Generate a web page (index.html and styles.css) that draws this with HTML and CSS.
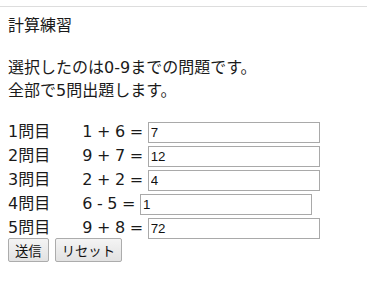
FILE: index.html
```html
<!DOCTYPE html>
<html lang="ja">
<head>
<meta charset="utf-8">
<title>計算練習</title>
<link rel="stylesheet" href="styles.css">
</head>
<body>
<div class="frame">
  <h1 class="title">計算練習</h1>
  <p class="intro">選択したのは0-9までの問題です。<br>全部で5問出題します。</p>
  <form class="quiz">
    <div class="row"><span class="num">1問目</span><span class="eq">1 + 6 = </span><input class="answer" type="text" value="7"></div>
    <div class="row"><span class="num">2問目</span><span class="eq">9 + 7 = </span><input class="answer" type="text" value="12"></div>
    <div class="row"><span class="num">3問目</span><span class="eq">2 + 2 = </span><input class="answer" type="text" value="4"></div>
    <div class="row"><span class="num">4問目</span><span class="eq">6 - 5 = </span><input class="answer" type="text" value="1"></div>
    <div class="row"><span class="num">5問目</span><span class="eq">9 + 8 = </span><input class="answer" type="text" value="72"></div>
    <div class="actions"><button class="btn" type="button">送信</button><button class="btn" type="reset">リセット</button></div>
  </form>
</div>
</body>
</html>
```
FILE: styles.css
```css
html, body {
  margin: 0;
  padding: 0;
  background: #ffffff;
}
body {
  font-family: "DejaVu Sans", "Noto Sans CJK JP", sans-serif;
  font-size: 16px;
  color: #1a1a1a;
}
.frame {
  margin-top: 6px;
  border-top: 1px solid #dddddd;
  padding: 0 8px;
}
.title {
  margin: 7px 0 0;
  font-size: 16px;
  font-weight: normal;
  line-height: 23px;
}
.intro {
  margin: 19px 0 0;
  line-height: 23px;
}
.quiz {
  margin: 18px 0 0;
}
.row {
  line-height: 24px;
  height: 24px;
  white-space: pre;
}
.num {
  margin-right: 32px;
}
.eq {
  word-spacing: -0.5px;
}
.answer {
  box-sizing: border-box;
  width: 172px;
  height: 21px;
  margin: 0;
  padding: 1px 2px;
  border: 1px solid #a9a9a9;
  font-family: "Liberation Sans", Arial, sans-serif;
  font-size: 13.33px;
  color: #111111;
  vertical-align: baseline;
}
.actions {
  display: flex;
  gap: 6px;
  margin-top: -2px;
}
.btn {
  box-sizing: border-box;
  height: 24px;
  margin: 0;
  padding: 0 6px;
  border: 1px solid #acacac;
  border-radius: 2px;
  background: linear-gradient(#f4f4f4, #e2e2e2);
  font-family: "Noto Sans CJK JP", sans-serif;
  font-size: 13.33px;
  color: #111111;
}
```
